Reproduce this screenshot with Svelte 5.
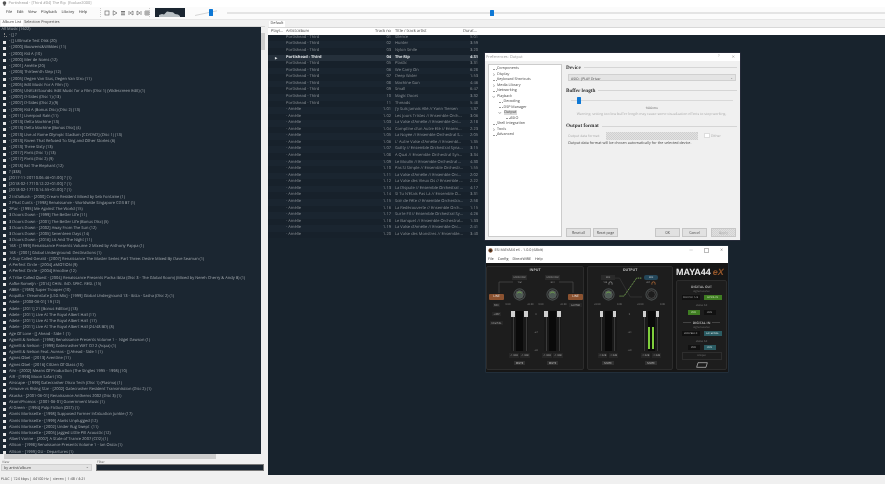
<script lang="ts">
    const albums: string[] = [
        '- [] Ultimate Test Disk (20)', '- [2000] Bouwens&Wikkies (11)', '- [2000] Kid A (10)', '- [2000] Mer de Noms (12)',
        '- [2001] Amélie (20)', '- [2003] Thirteenth Step (12)', '- [2005] Degen Van Sius, Degen Van Stro (11)',
        '- [2005] Edit Music For A Film (1)', '- [2005] UNKLE/Sounds: Edit Music for a Film (Disc 1) (Widescreen Edit) (1)',
        '- [2007] D-Sides (Disc 1) (13)', '- [2007] D-Sides (Disc 2) (9)', '- [2009] Kid A (Bonus Disc) (Disc 2) (13)',
        '- [2011] Liverpool Rain (11)', '- [2013] Delta Machine (13)', '- [2013] Delta Machine [Bonus Disc] (4)',
        '- [2013] Live at Rome Olympic Stadium [CD/DVD] (Disc 1) (13)', '- [2013] Raven That Refused To Sing and Other Stories (6)',
        '- [2013] Three Sixty (13)', '- [2017] Paris (Disc 1) (13)', '- [2017] Paris (Disc 2) (9)', '- [2018] Eat The Elephant (12)',
        '? (338)', '[2017-11-20T10:06:46+01:00] ? (1)', '[2018-02-17T10:12:22+01:00] ? (1)', '[2018-02-17T10:14:55+01:00] ? (1)',
        '2 InDaBush - [2000] Cream Resident Mixed by Seb Fontaine (1)', '2 Phat Cunts - [1998] Renaissance - Worldwide Singapore CD3 BT (1)',
        '2Pac - [1995] Me Against The World (15)', '3 Doors Down - [1999] The Better Life (11)', '3 Doors Down - [2001] The Better Life (Bonus Disc) (5)',
        '3 Doors Down - [2002] Away From The Sun (12)', '3 Doors Down - [2005] Seventeen Days (14)', '3 Doors Down - [2016] Us And The Night (11)',
        '168 - [1999] Renaissance Presents Volume 2 Mixed by Anthony Pappa (1)', '168 - [2001] Global Underground: Destinations (1)',
        'A Guy Called Gerald - [2007] Renaissance The Master Series Part Three: Desire Mixed By Dave Seaman (1)',
        'A Perfect Circle - [2004] aMOTION (9)', 'A Perfect Circle - [2004] Emotive (12)',
        'A Tribe Called Quest - [2004] Renaissance Presents Pacha Ibiza (Disc 3 - The Global Room) (Mixed by Nereh Cherry & Andy B) (1)',
        'Aafke Romeijn - [2014] CHIN. IND. SPEC. RESI. (15)', 'ABBA - [1980] Super Trouper (10)',
        'Acquilla - Dreamstate [LSG Mix] - [1999] Global Underground 13 - Ibiza - Sasha (Disc 2) (1)', 'Adele - [2008-06-01] 19 (12)',
        'Adele - [2011] 21 [Bonus Edition] (13)', 'Adele - [2011] Live At The Royal Albert Hall (17)', 'Adele - [2011] Live At The Royal Albert Hall  (17)',
        'Adele - [2011] Live At The Royal Albert Hall (24/48 BD) (8)', 'Age Of Love - [] Ahead - Side 1 (1)',
        'Agnelli & Nelson - [1998] Renaissance Presents Volume 1 -  Nigel Dawson (1)', 'Agnelli & Nelson - [1999] Gatecrasher WET CD 2 (Aqua) (1)',
        'Agnelli & Nelson Feat. Aureas - [] Ahead - Side 1 (1)', 'Agnes Obel - [2013] Aventine (11)', 'Agnes Obel - [2016] Citizen Of Glass (10)',
        'Aim - [2002] Means Of Production (The Singles 1995 - 1998) (10)', 'AIR - [1998] Moon Safari (10)',
        'Airscape - [1999] Gatecrasher Disco Tech (Disc 1) (Plasma) (1)', 'Airwave vs Rising Star - [2002] Gatecrasher Resident Transmission (Disc 2) (1)',
        'Akasha - [2001-06-01] Renaissance Anthems 2002 (Disc 3) (1)', 'Akom/Promos - [2001-06-01] Government Music (1)', 'Al Green - [1994] Pulp Fiction (OST) (1)',
        'Alanis Morissette - [1998] Supposed Former Infatuation Junkie (17)', 'Alanis Morissette - [1999] Alanis Unplugged (12)',
        'Alanis Morissette - [2002] Under Rug Swept  (11)', 'Alanis Morissette - [2005] Jagged Little Pill Acoustic (12)',
        'Albert Vonne - [2007] A State of Trance 2007 (CD2) (1)', 'Allison - [1998] Renaissance Presents Volume 1 - Ian Ossia (1)', 'Allison - [1999] GU - Departures (1)'
    ];

    const third: [string, string][] = [
        ['Silence', '5:01'], ['Hunter', '3:59'], ['Nylon Smile', '3:20'], ['The Rip', '4:31'], ['Plastic', '3:31'], ['We Carry On', '6:28'],
        ['Deep Water', '1:53'], ['Machine Gun', '4:46'], ['Small', '6:47'], ['Magic Doors', '3:32'], ['Threads', '5:48']
    ];
    const amelie: [string, string][] = [
        ["J'y Suis Jamais Allé // Yann Tiersen", '1:37'], ['Les Jours Tristes // Ensemble Orch...', '3:06'], ["La Valse d'Amélie // Ensemble Orc...", '2:18'],
        ["Comptine d'un Autre Été // Ensem...", '2:23'], ['La Noyée // Ensemble Orchestral S...', '2:05'], ["L' Autre Valse d'Amélie // Ensembl...", '1:35'],
        ['Guilty // Ensemble Orchestral Syna...', '3:15'], ['A Quai // Ensemble Orchestral Syn...', '3:34'], ['Le Moulin // Ensemble Orchestral ...', '4:30'],
        ['Pas Si Simple // Ensemble Orchestr...', '1:55'], ["La Valse d'Amélie // Ensemble Orc...", '2:02'], ['La Valse des Vieux Os // Ensemble ...', '2:22'],
        ['La Dispute // Ensemble Orchestral ...', '4:17'], ["Si Tu N'Étais Pas Là // Ensemble O...", '3:31'], ['Soir de Fête // Ensemble Orchestra...', '2:58'],
        ['La Redécouverte // Ensemble Orch...', '1:15'], ['Sur le Fil // Ensemble Orchestral Sy...', '4:26'], ['Le Banquet // Ensemble Orchestral...', '1:33'],
        ["La Valse d'Amélie // Ensemble Orc...", '2:41'], ['La Valse des Monstres // Ensemble...', '3:40']
    ];

    const prefTree: { label: string, level: number, arrow?: string, selected?: boolean }[] = [
        { label: 'Components', level: 0 }, { label: 'Display', level: 0, arrow: 'closed' }, { label: 'Keyboard Shortcuts', level: 0 },
        { label: 'Media Library', level: 0, arrow: 'closed' }, { label: 'Networking', level: 0 }, { label: 'Playback', level: 0, arrow: 'open' },
        { label: 'Decoding', level: 1 }, { label: 'DSP Manager', level: 1 }, { label: 'Output', level: 1, arrow: 'open', selected: true },
        { label: 'ASIO', level: 2 }, { label: 'Shell Integration', level: 0 }, { label: 'Tools', level: 0, arrow: 'closed' }, { label: 'Advanced', level: 0 }
    ];
</script>

{#snippet channel(meter)}
    <div class="faders">
        <div class="fader-track"><i class="cap"></i></div>
        <div class="meter-well">
            {#if meter}<b class="lvl"></b><b class="lvl"></b>{/if}
        </div>
        <div class="fader-track"><i class="cap"></i></div>
    </div>
    <div class="reads"><span>-1.0dB</span><span>-1.0dB</span></div>
    <div class="mute">MUTE</div>
{/snippet}

{#snippet knob(ring)}
    <svg class="knob" viewBox="0 0 14 14">
        <circle cx="7" cy="7" r="6" fill="none" stroke="#474c4c" stroke-width="1.2" />
        <circle cx="7" cy="7" r="4.2" fill={ring ? '#4d5a54' : '#1d1d1d'} stroke="#666" stroke-width=".6" />
        {#if ring}<path d="M4.6 5.6 A3 3 0 0 1 9.4 5.6" fill="none" stroke="#79b04c" stroke-width="1" />{/if}
    </svg>
{/snippet}

{#snippet phones(color)}
    <svg class="phones" viewBox="0 0 6 5"><path d="M1 4.5V3a2 2 0 0 1 4 0v1.5" fill="none" stroke={color} stroke-width=".9" /></svg>
{/snippet}

<div class="app">
    <header class="titlebar">
        <svg class="skull" viewBox="0 0 6 6"><circle cx="3" cy="2.5" r="2.2" fill="#555" /><rect x="2" y="4" width="2" height="1.6" fill="#555" /></svg>
        <span>Portishead - [Third #04] The Rip  [foobar2000]</span>
    </header>

    <div class="toolbar">
        <nav class="menu">
            <span>File</span><span>Edit</span><span>View</span><span>Playback</span><span>Library</span><span>Help</span>
        </nav>
        <div class="transport">
            <svg viewBox="0 0 6 6"><rect x="1" y="1" width="4" height="4" fill="none" stroke="#555" stroke-width=".6" /></svg>
            <svg viewBox="0 0 6 6"><path d="M1.2 .8 5 3 1.2 5.2z" fill="none" stroke="#555" stroke-width=".6" /></svg>
            <svg viewBox="0 0 6 6"><path d="M1 1h4v1H1zM1 2.6h4v1H1zM1 4.2h4v1H1z" fill="#777" /></svg>
            <svg viewBox="0 0 6 6"><path d="M1 1v4M5 1 2 3l3 2z" fill="none" stroke="#555" stroke-width=".6" /></svg>
            <svg viewBox="0 0 6 6"><path d="M5 1v4M1 1l3 2-3 2z" fill="none" stroke="#555" stroke-width=".6" /></svg>
            <svg viewBox="0 0 6 6"><path d="M1 1h4v4H1zM3 1v4M1 3h4" fill="none" stroke="#666" stroke-width=".6" /></svg>
        </div>
        <div class="viz">
            <svg viewBox="0 0 30 9" preserveAspectRatio="none"><path d="M4 9V7l3-1 2 .5 3-3 3 .5 3 .3 2 1.7 3 .5 2 1.5v1z" fill="#b9c0c4" /></svg>
        </div>
        <div class="volume">
            <svg viewBox="0 0 22 6"><path d="M0 5.5 22 .8" stroke="#bbb" stroke-width=".6" /></svg>
            <i class="blue-thumb"></i>
        </div>
        <div class="seek"><i class="blue-thumb"></i></div>
    </div>

    <main class="main">
        <section class="left">
            <div class="tabs">
                <span class="tab on">Album List</span><span class="tab">Selection Properties</span>
            </div>
            <div class="library">
                <div class="tree">
                    <div class="row root">All Music (1622)</div>
                    <div class="row"><i class="branch"></i>- [] ?</div>
                    {#each albums as a}
                        <div class="row"><i class="box"></i>{a}</div>
                    {/each}
                </div>
                <div class="vscroll">
                    <i class="vthumb"></i>
                </div>
            </div>
            <div class="hscroll"><i class="hthumb"></i></div>
            <div class="filters">
                <div class="view">
                    <label for="v">View</label>
                    <div id="v" class="combo">by artist/album<span class="chev">⌄</span></div>
                </div>
                <div class="filter">
                    <label for="f">Filter</label>
                    <div id="f" class="filter-box"></div>
                </div>
            </div>
        </section>

        <section class="right">
            <div class="tabs pl-tabs"><span class="tab on">Default</span></div>
            <div class="playlist">
                <div class="pl-head">
                    <span class="c-play">Playi...</span><span class="c-artist">Artist/album</span><span class="c-no">Track no</span><span class="c-title">Title / track artist</span><span class="c-dur">Durat...</span>
                </div>
                {#each third as t, i}
                    <div class="pl-row" class:current={i === 3}>
                        <span class="c-play">{i === 3 ? '▶' : ''}</span><span class="c-artist">Portishead - Third</span><span class="c-no">{String(i + 1).padStart(2, '0')}</span><span class="c-title">{t[0]}</span><span class="c-dur">{t[1]}</span>
                    </div>
                {/each}
                {#each amelie as t, i}
                    <div class="pl-row">
                        <span class="c-play"></span><span class="c-artist"> - Amélie</span><span class="c-no">1.{String(i + 1).padStart(2, '0')}</span><span class="c-title">{t[0]}</span><span class="c-dur">{t[1]}</span>
                    </div>
                {/each}
            </div>
        </section>
    </main>

    <footer class="status">FLAC | 724 kbps | 44100 Hz | stereo | 1:48 / 4:21</footer>

    <!-- floating windows -->
    <div class="prefs">
        <div class="win-title">
            <span>Preferences: Output</span>
            <span class="win-btns"><span>?</span><span>✕</span></span>
        </div>
        <div class="prefs-body">
            <ul class="pref-tree">
                {#each prefTree as p}
                    <li style="padding-left:{p.level * 6.5 + 8}px">
                        {#if p.arrow}
                            <svg class="twisty" style="left:{p.level * 6.5 + 2.5}px" viewBox="0 0 4 4">
                                <path d={p.arrow === 'open' ? 'M.5 1.2 2 3 3.5 1.2' : 'M1.2 .5 3 2 1.2 3.5'} fill="none" stroke="#777" stroke-width=".6" />
                            </svg>
                        {:else}
                            <i class="dash" style="left:{p.level * 6.5 + 3.5}px"></i>
                        {/if}
                        <span class:sel={p.selected}>{p.label}</span>
                    </li>
                {/each}
            </ul>
            <div class="pref-page">
                <h4>Device</h4>
                <div class="combo dev">ASIO : JPLAY Driver<span class="chev">⌄</span></div>
                <h4 class="buf">Buffer length</h4>
                <div class="slider"><i class="blue-thumb"></i></div>
                <div class="ms">1000 ms</div>
                <div class="warn">Warning: setting too low buffer length may cause some visualization effects to stop working.</div>
                <h4 class="fmt">Output format</h4>
                <div class="format-row">
                    <span class="dis">Output data format:</span>
                    <div class="hatch"></div>
                    <i class="check"></i><span class="dis">Dither</span>
                </div>
                <div class="info">Output data format will be chosen automatically for the selected device.</div>
                <div class="btns">
                    <button>Reset all</button><button>Reset page</button>
                    <span class="grow"></span>
                    <button>OK</button><button>Cancel</button><button class="off">Apply</button>
                </div>
            </div>
        </div>
    </div>

    <div class="esi">
        <div class="esi-title">
            <svg class="esi-ico" viewBox="0 0 6 6"><circle cx="3" cy="3" r="2.6" fill="#7a4a2a" /><circle cx="3" cy="3" r="1.2" fill="#222" /></svg>
            <span>ESI MAYA44 eX - 1.0.0 (64bit)</span>
            <span class="esi-btns"><span>—</span><span class="sq"></span><span>✕</span></span>
        </div>
        <div class="esi-menu"><span>File</span><span>Config</span><span>DirectWIRE</span><span>Help</span></div>
        <div class="mixer">
            <div class="panel input">
                <div class="p-title">INPUT</div>
                <svg class="wires" viewBox="0 0 98 30"><path d="M12 26V15H26M86 26V15H72" fill="none" stroke="#555" stroke-width=".6" /></svg>
                <div class="input-cols">
                    <div class="side">
                        <div class="line-btn">LINE</div>
                        <div class="tag">MIC</div>
                        <div class="tag gap">+48V</div>
                        <div class="tag gap">DIGITAL</div>
                    </div>
                    <div class="strip">
                        <div class="mon"><span>MONITOR</span><span>1/2</span></div>
                        {@render knob(true)}
                        <div class="db"><span>0.00</span><span>+0.00</span></div>
                        {@render channel(false)}
                    </div>
                    <div class="scale"><span>0</span><span>-24</span><span>-60</span></div>
                    <div class="strip">
                        <div class="mon"><span>MONITOR</span><span>3/4</span></div>
                        {@render knob(true)}
                        <div class="db"><span>0.00</span><span>+0.00</span></div>
                        {@render channel(false)}
                    </div>
                    <div class="side">
                        <div class="line-btn">LINE</div>
                        <div class="tag">GUITAR</div>
                    </div>
                </div>
            </div>

            <div class="panel output">
                <div class="p-title">OUTPUT</div>
                <svg class="routing" viewBox="0 0 40 26">
                    <path d="M0 2H5L17 23H30M5 22H10L24 2H30" fill="none" stroke="#333" stroke-width="1" />
                    <path d="M5 22H10L24 2H30" fill="none" stroke="#7fc04e" stroke-width=".9" stroke-dasharray="1.2 1" />
                </svg>
                <div class="output-cols">
                    <div class="strip">
                        <div class="mon mix"><span>MIX</span><span>1/2 {@render phones('#999')}</span></div>
                        {@render knob(true)}
                        <div class="db"><span>+0.00</span><span>0.00</span></div>
                        {@render channel(false)}
                    </div>
                    <div class="scale"><span>0</span><span>-24</span><span>-60</span></div>
                    <div class="strip">
                        <div class="mon mix on"><span>MIX</span><span>3/4 {@render phones('#c7763a')}</span></div>
                        {@render knob(false)}
                        <div class="db"><span>+0.00</span><span>0.00</span></div>
                        {@render channel(true)}
                    </div>
                </div>
            </div>

            <div class="side-panel">
                <div class="logo">MAYA44<span>eX</span></div>
                <div class="digital">
                    <div class="d-head first">DIGITAL OUT</div>
                    <div class="d-sub">signal source</div>
                    <div class="d-row"><span class="pill">OUTPUT 1/2</span><span class="pill green">S/PDIF IN</span></div>
                    <div class="d-sub wide">status bit</div>
                    <div class="d-row st"><span class="pill tiny green">PRO</span><span class="pill tiny">CON</span></div>
                    <div class="d-head rule">DIGITAL IN</div>
                    <div class="d-sub">signal source</div>
                    <div class="d-row"><span class="pill">LOOPBACK</span><span class="pill teal">EXTERNAL</span></div>
                    <div class="d-sub wide">status bit</div>
                    <div class="d-row"><span class="pill tiny">PRO</span><span class="pill tiny teal">CON</span></div>
                    <div class="unique">Unique</div>
                    <svg class="esi-logo" viewBox="0 0 18 8"><path d="M3 .5h14l-2 7H1z" fill="none" stroke="#ddd" stroke-width=".9" /></svg>
                </div>
            </div>
        </div>
    </div>
</div>

<style>
    :global(body) { margin: 0; overflow: hidden; background: #f0f0f0; }
    .app {
        position: relative;
        width: 885px;
        height: 484px;
        overflow: hidden;
        display: flex;
        flex-direction: column;
        font-family: "Open Sans", "Noto Sans", sans-serif;
        font-size: 4px;
        color: #555;
        background: #f0f0f0;
        text-rendering: geometricPrecision;
        filter: blur(.3px);
    }
    .titlebar {
        height: 7px;
        flex: none;
        background: #fff;
        display: flex;
        align-items: center;
        gap: 1.5px;
        padding-left: 2px;
        color: #999;
        font-size: 3.9px;
        white-space: pre;
    }
    .skull { width: 5px; height: 5px; }
    .toolbar {
        height: 11.5px;
        flex: none;
        background: #fbfbfb;
        display: flex;
        align-items: center;
        border-bottom: 1px solid #e6e6e6;
    }
    .menu { display: flex; gap: 4.4px; padding-left: 6px; width: 92px; color: #333; font-size: 3.95px; }
    .transport {
        margin-left: 2px;
        width: 50px;
        height: 9px;
        padding-left: 3px;
        box-sizing: border-box;
        display: flex;
        align-items: center;
        gap: 2px;
        border-left: 1px dotted #ccc;
        border-right: 1px dotted #ccc;
    }
    .transport svg { width: 6px; height: 6px; flex: none; }
    .viz { width: 30px; height: 9px; margin-left: 5px; background: #1b2631; flex: none; }
    .viz svg { width: 100%; height: 100%; display: block; }
    .volume { position: relative; width: 22px; height: 6px; margin-left: 10px; flex: none; }
    .volume svg { width: 100%; height: 100%; display: block; }
    .volume .blue-thumb { position: absolute; left: 14px; top: -1px; }
    .seek {
        margin-left: 10px;
        flex: 1;
        height: 2.5px;
        background: #e4e4e4;
        position: relative;
    }
    .seek .blue-thumb { position: absolute; left: 263px; top: -2px; height: 6px; }
    .blue-thumb { display: block; width: 3.5px; height: 7px; background: #0e78d5; border-radius: .5px; }

    .main { flex: 1; min-height: 0; display: flex; }
    .left { width: 265px; flex: none; display: flex; flex-direction: column; }
    .right { flex: 1; min-width: 0; padding-left: 3px; display: flex; flex-direction: column; padding-bottom: 2px; }
    .tabs { height: 6px; flex: none; display: flex; align-items: flex-end; padding-left: 1px; background: #f0f0f0; border-bottom: 1px solid #d8d8d8; }
    .tab { padding: 0 1.5px; height: 6px; line-height: 5.6px; color: #444; font-size: 3.8px; }
    .tab.on { background: #fff; }
    .pl-tabs { height: 7px; }

    .library { flex: 1; min-height: 0; display: flex; }
    .tree { flex: 1; min-width: 0; background: #1b2631; color: #a4aaaf; overflow: hidden; padding-top: .3px; }
    .row { height: 6.22px; line-height: 6.22px; white-space: pre; position: relative; padding-left: 9px; font-size: 4px; }
    .row.root { padding-left: 1.5px; }
    .box { position: absolute; left: 2.6px; top: 1.6px; width: 3px; height: 3px; background: #e8e8e8; }
    .branch { position: absolute; left: 3.5px; top: 0; width: 2px; height: 3px; border-left: 1px dotted #888; border-bottom: 1px dotted #888; }
    .vscroll { width: 4px; flex: none; background: #f0f0f0; position: relative; }
    .vthumb { position: absolute; left: 0; top: 6px; width: 4px; height: 17px; background: #cdcdcd; }
    .hscroll { height: 5px; flex: none; background: #f0f0f0; position: relative; margin-right: 4px; }
    .hthumb { position: absolute; left: 4px; top: 0; width: 212px; height: 5px; background: #cdcdcd; }
    .filters { height: 17px; flex: none; display: flex; gap: 4px; padding: 1.5px 1px 0 1px; }
    .filters label { display: block; height: 4px; line-height: 4px; font-size: 3.3px; color: #666; padding-left: 1px; }
    .view { width: 91px; flex: none; }
    .filter { flex: 1; }
    .combo { position: relative; height: 7px; line-height: 7px; background: #e3e3e3; border: .5px solid #d0d0d0; box-sizing: border-box; padding-left: 2px; font-size: 3.8px; color: #444; }
    .chev { position: absolute; right: 2px; top: -1px; color: #666; }
    .filter-box { height: 7px; background: #1b2631; border: 1px solid #777; box-sizing: border-box; }

    .playlist { flex: 1; background: #18232d; color: #8d9398; overflow: hidden; }
    .pl-head, .pl-row { display: flex; font-size: 4px; white-space: pre; }
    .pl-head { height: 7.4px; line-height: 7px; background: #fff; color: #444; }
    .pl-row { height: 6.57px; line-height: 6.57px; width: 210px; background: #1a2530; }
    .pl-row:nth-child(even) { background: #17212b; }
    .pl-row.current { background: #25303b; color: #dfe3e6; font-weight: 700; }
    .c-play { width: 18px; padding-left: 3px; box-sizing: border-box; flex: none; }
    .pl-row .c-play { padding-left: 7px; font-size: 3px; }
    .c-artist { width: 87px; flex: none; overflow: hidden; }
    .c-no { width: 18px; text-align: right; flex: none; }
    .c-title { width: 68px; margin-left: 4px; flex: none; overflow: hidden; }
    .c-dur { width: 15px; text-align: right; flex: none; }
    .pl-head .c-dur { text-align: left; }

    .status { height: 7px; flex: none; line-height: 6.5px; padding-left: 1px; font-size: 3.7px; color: #444; background: #f0f0f0; }

    /* preferences window */
    .prefs {
        position: absolute;
        left: 485px;
        top: 53px;
        width: 255px;
        height: 187px;
        background: #f0f0f0;
        display: flex;
        flex-direction: column;
        box-shadow: 0 0 0 .5px #334;
    }
    .win-title { height: 8px; flex: none; background: #fff; display: flex; justify-content: space-between; align-items: center; padding: 0 5px 0 1px; color: #999; font-size: 3.9px; }
    .win-btns { display: flex; gap: 12px; }
    .prefs-body { flex: 1; min-height: 0; display: flex; padding: 3px 2px 3px 3px; gap: 4px; }
    .pref-tree { list-style: none; margin: 0; padding: 1px 0 0; width: 74px; flex: none; background: #fff; border: .5px solid #ccc; box-sizing: border-box; }
    .pref-tree li { position: relative; height: 5.5px; line-height: 5.5px; font-size: 3.7px; color: #444; white-space: nowrap; }
    .twisty { position: absolute; top: 1px; width: 3.5px; height: 3.5px; }
    .dash { position: absolute; top: 2.7px; width: 4px; border-top: .5px dotted #999; }
    .pref-tree .sel { background: #d9d9d9; padding: 0 .5px; }
    .pref-page { flex: 1; min-width: 0; display: flex; flex-direction: column; padding-right: 1px; }
    h4 { margin: 0; display: flex; align-items: center; gap: 3px; height: 7px; font-size: 5.2px; font-weight: 700; color: #333; font-family: "Liberation Serif", serif; }
    h4::after { content: ''; flex: 1; height: .6px; background: #d5d5d5; }
    .dev { margin: 3px 1px 0 2px; height: 7px; background: #e4e4e4; font-size: 3.4px; }
    .buf { margin-top: 6px; }
    .slider { position: relative; height: .7px; background: #d9d9d9; margin: 6px 4px 0 5px; }
    .slider .blue-thumb { position: absolute; left: 6px; top: -3px; height: 7px; width: 3.5px; }
    .ms { text-align: center; margin-top: 5px; font-size: 3.1px; color: #555; }
    .warn { text-align: center; margin-top: 2px; font-size: 3.5px; color: #aaa; white-space: nowrap; }
    .fmt { margin-top: 6px; }
    .format-row { display: flex; align-items: center; height: 8px; margin-top: 2px; padding-left: 2px; font-size: 3.4px; }
    .dis { color: #aaa; }
    .format-row > .dis:first-child { width: 38px; flex: none; }
    .hatch { width: 92px; height: 8px; background: repeating-linear-gradient(45deg, #cfcfcf 0 .7px, #e2e2e2 .7px 1.4px); }
    .check { width: 3.5px; height: 3.5px; margin: 0 1.5px 0 6px; background: #fff; border: .5px solid #ddd; }
    .info { margin-top: 1.5px; padding-left: 2px; font-size: 3.7px; color: #444; white-space: nowrap; }
    .btns { margin-top: auto; display: flex; gap: 2px; padding-right: 1px; }
    .grow { flex: 1; }
    button { width: 25px; height: 9px; padding: 0; font: inherit; font-size: 3.4px; color: #444; background: #e1e1e1; border: .5px solid #c6c6c6; box-sizing: border-box; }
    button.off { color: #aaa; margin-left: 2px; background: repeating-linear-gradient(45deg, #d2d2d2 0 .7px, #e0e0e0 .7px 1.4px); }

    /* audio interface window */
    .esi {
        position: absolute;
        left: 486px;
        top: 246px;
        width: 242px;
        height: 126px;
        display: flex;
        flex-direction: column;
        background: #161616;
        box-shadow: 0 0 0 .5px #2b3a48;
    }
    .esi-title { height: 9px; flex: none; background: #fff; display: flex; align-items: center; gap: 1.5px; padding-left: 2px; color: #444; font-size: 3.7px; }
    .esi-ico { width: 5px; height: 5px; }
    .esi-btns { margin-left: auto; margin-right: 5px; display: flex; gap: 11px; color: #777; align-items: center; }
    .sq { width: 3px; height: 3px; border: .5px solid #bbb; }
    .esi-menu { height: 8px; flex: none; background: #fff; display: flex; align-items: center; gap: 4px; padding-left: 2px; color: #333; font-size: 3.6px; }
    .mixer { flex: 1; min-height: 0; display: flex; gap: 3px; padding: 3px 1px 2px 0; color: #ccc; }
    .panel { position: relative; background: #1d1d1d; border-radius: 2px; border: .5px solid #2c2c2c; box-sizing: border-box; }
    .input { width: 98px; flex: none; }
    .output { width: 86px; flex: none; }
    .p-title { text-align: center; height: 7px; line-height: 7px; font-size: 3.6px; font-weight: 700; color: #bbb; }
    .input-cols { display: flex; justify-content: space-between; padding: 0 1.5px; }
    .output-cols { display: flex; justify-content: space-between; padding: 0 6px 0 5px; }
    .wires { position: absolute; left: 0; top: 0; width: 98px; height: 30px; }
    .routing { position: absolute; left: 27px; top: 9px; width: 36px; height: 24px; }
    .side { width: 16px; padding-top: 20px; display: flex; flex-direction: column; gap: 3.5px; align-items: center; flex: none; position: relative; }
    .line-btn { width: 15px; height: 5.5px; line-height: 5.5px; text-align: center; font-size: 3px; color: #eee; background: #8b5230; border-radius: 1px; }
    .tag { font-size: 2.7px; line-height: 4px; padding: 0 1.5px; background: #262626; color: #aaa; }
    .tag.gap { margin-top: 1.5px; }
    .strip { width: 30px; display: flex; flex-direction: column; align-items: center; flex: none; position: relative; z-index: 1; }
    .mon { display: flex; flex-direction: column; align-items: center; font-size: 2.6px; line-height: 5px; color: #aaa; margin-top: 1px; }
    .mon span { display: flex; align-items: center; gap: .7px; }
    .mon span:first-child { background: #2a2a2a; padding: 0 1px; }
    .mix span:first-child { padding: 0 5px; }
    .mix.on span:first-child { background: #24475a; color: #ddd; border-radius: 2px; }
    .phones { width: 5px; height: 4px; }
    .knob { width: 13px; height: 13px; margin-top: 3px; display: block; }
    .db { width: 100%; display: flex; justify-content: space-between; padding: 0 1px; box-sizing: border-box; font-size: 2.5px; line-height: 4px; color: #888; margin-top: 1px; }
    .faders { display: flex; justify-content: space-between; width: 17px; height: 40px; margin-top: 5px; background: #191919; }
    .fader-track { position: relative; width: 1px; height: 100%; margin: 0 1.5px; background: #3b3b3b; }
    .cap { position: absolute; left: -1.2px; width: 3.4px; height: 6px; background: #cfcfcf; }
    .meter-well { width: 7px; height: 100%; background: #0a0a0a; display: flex; gap: 1.5px; justify-content: center; align-items: flex-end; padding-bottom: 2px; box-sizing: border-box; }
    .lvl { width: 2px; height: 22px; background: #7fce3c; }
    .reads { display: flex; gap: 1.5px; margin-top: 2px; font-size: 2.5px; line-height: 5px; color: #aaa; }
    .reads span { background: #262626; padding: 0 1px; white-space: nowrap; }
    .mute { margin-top: 2.5px; padding: 0 2px; background: #303030; font-size: 2.7px; line-height: 4.5px; color: #ccc; }
    .scale { width: 3px; margin-top: 38px; height: 40px; display: flex; flex-direction: column; justify-content: space-between; align-items: center; font-size: 2.5px; color: #888; flex: none; }
    .output .scale { width: 10px; }
    .side-panel { flex: 1; min-width: 0; display: flex; flex-direction: column; }
    .logo { height: 12px; line-height: 12px; font-family: "Liberation Sans", sans-serif; font-weight: 700; font-size: 9px; color: #e8e8e8; white-space: nowrap; }
    .logo span { color: #94562a; margin-left: 2px; font-style: italic; }
    .digital { flex: 1; margin-top: 2px; background: #1d1d1d; border: .5px solid #2c2c2c; border-radius: 2px; display: flex; flex-direction: column; align-items: center; }
    .d-head { font-size: 3.3px; font-weight: 700; line-height: 5px; color: #aaa; }
    .d-head.first { margin-top: 2.5px; }
    .d-head.rule { margin-top: 5px; width: 100%; display: flex; align-items: center; justify-content: center; gap: 1.5px; }
    .d-head.rule::before, .d-head.rule::after { content: ''; width: 8px; height: .5px; background: #444; }
    .d-sub { font-size: 2.7px; line-height: 4px; color: #777; margin-top: .5px; }
    .d-sub.wide { margin-top: 3.5px; }
    .d-row { display: flex; gap: 4px; margin-top: 1.5px; }
    .d-row.st { margin-top: 2.5px; }
    .pill { min-width: 17px; text-align: center; font-size: 2.6px; line-height: 5px; padding: 0 .5px; background: #111; color: #bbb; white-space: nowrap; }
    .pill.tiny { min-width: 11px; }
    .pill.green { background: #3f7d22; color: #cfe8bc; }
    .pill.teal { background: #2b5c63; color: #d5e5e6; }
    .unique { margin-top: 2.5px; width: 40px; text-align: center; font-size: 2.6px; line-height: 5.5px; color: #777; border: .5px solid #2e2e2e; box-sizing: border-box; }
    .esi-logo { width: 12px; height: 6px; margin-top: 2.5px; }
</style>
